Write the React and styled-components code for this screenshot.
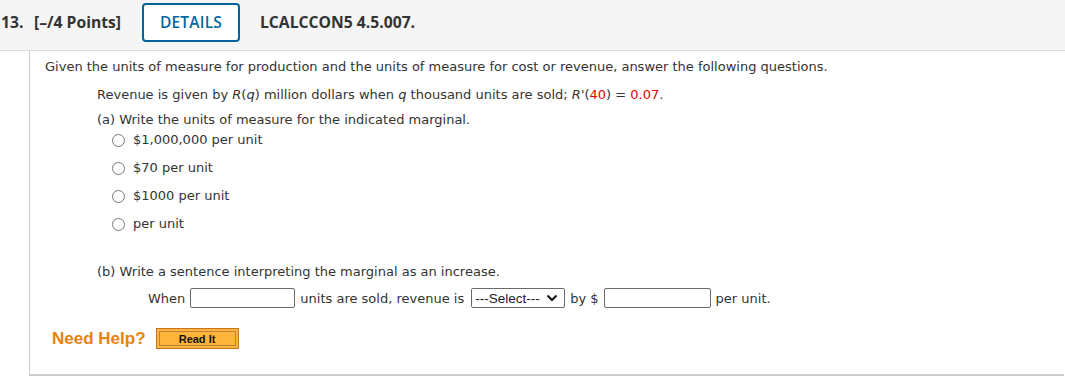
import React from 'react';
import styled, { createGlobalStyle } from 'styled-components';

const GlobalStyle = createGlobalStyle`
  body {
    margin: 0;
    background: #fff;
    font-family: "DejaVu Sans", Verdana, sans-serif;
    color: #333;
  }
`;

const Page = styled.div`
  width: 1065px;
  height: 384px;
  overflow: hidden;
`;

const Header = styled.div`
  display: flex;
  align-items: center;
  height: 51px;
  background: #f5f5f5;
  border-bottom: 1px solid #dcdcdc;
  font-family: "Open Sans", sans-serif;
  font-weight: 700;
  font-size: 15.7px;
  color: #333;
  padding-bottom: 6px;
  box-sizing: border-box;
`;

const Number = styled.span`
  margin-left: 1px;
  width: 33px;
`;

const Points = styled.span`
  width: 108px;
`;

const DetailsButton = styled.button`
  width: 98px;
  height: 39px;
  border: 2px solid #00639a;
  border-radius: 4px;
  background: #fff;
  color: #0067a0;
  font-family: "Open Sans", sans-serif;
  font-size: 15.5px;
  font-weight: 600;
  letter-spacing: 0.2px;
  margin-right: 20px;
  cursor: pointer;
`;

const Body = styled.div`
  margin-left: 29px;
  width: 1035px;
  height: 325px;
  border-left: 1px solid #ccc;
  border-bottom: 2px solid #ccc;
  box-sizing: border-box;
  padding: 8px 0 0 15px;
  font-size: 13px;
`;

const Intro = styled.p`
  margin: 0;
  line-height: 16px;
`;

const Indented = styled.div`
  padding-left: 52px;
  display: flex;
  flex-direction: column;
`;

const Line = styled.p`
  margin: ${p => p.$top || 0}px 0 0;
  line-height: 16px;
`;

const Red = styled.span`
  color: #e60000;
`;

const Italic = styled.i``;

const Choices = styled.div`
  display: flex;
  flex-direction: column;
  gap: 12px;
  margin: 4px 0 0 15px;
`;

const Choice = styled.label`
  display: flex;
  align-items: center;
  gap: 8px;
  line-height: 16px;
`;

const Radio = styled.span`
  width: 11px;
  height: 11px;
  border: 1px solid #767676;
  border-radius: 50%;
  background: #fff;
`;

const SentenceRow = styled.div`
  display: flex;
  align-items: center;
  gap: 5px;
  margin: 8px 0 0 51px;
`;

const TextInput = styled.span`
  display: inline-block;
  width: ${p => p.$w}px;
  height: 20px;
  border: 1px solid #6a6a6a;
  border-radius: 2px;
  box-sizing: border-box;
  background: #fff;
`;

const Select = styled.span`
  display: inline-flex;
  align-items: center;
  justify-content: space-between;
  width: 94px;
  height: 20px;
  margin: 0 0 0 2px;
  border: 1px solid #6a6a6a;
  border-radius: 2px;
  box-sizing: border-box;
  padding: 0 6px 0 3px;
  font-family: "Liberation Sans", Arial, sans-serif;
  font-size: 13.5px;
  color: #222;
`;

const HelpRow = styled.div`
  display: flex;
  align-items: center;
  gap: 10px;
  margin: 20px 0 0 7px;
`;

const HelpLabel = styled.span`
  font-family: "Liberation Sans", Arial, sans-serif;
  font-weight: 700;
  font-size: 17px;
  color: #e8820e;
`;

const ReadIt = styled.button`
  width: 83px;
  height: 21px;
  background: #ffb53c;
  border: 1px solid #c8741c;
  box-shadow: inset 0 0 0 2px #ffb53c, inset 0 0 0 3px #c08040;
  font-family: "Liberation Sans", Arial, sans-serif;
  font-weight: 700;
  font-size: 11px;
  color: #111;
  padding: 0;
  cursor: pointer;
`;

const choices = ['$1,000,000 per unit', '$70 per unit', '$1000 per unit', 'per unit'];

export default function App() {
  return (
    <Page>
      <GlobalStyle />
      <Header>
        <Number>13.</Number>
        <Points>[–/4 Points]</Points>
        <DetailsButton>DETAILS</DetailsButton>
        <span>LCALCCON5 4.5.007.</span>
      </Header>
      <Body>
        <Intro>
          Given the units of measure for production and the units of measure for cost or revenue, answer the following questions.
        </Intro>
        <Indented>
          <Line $top={12}>
            Revenue is given by <Italic>R</Italic>(<Italic>q</Italic>) million dollars when <Italic>q</Italic> thousand units are sold; <Italic>R'</Italic>(<Red>40</Red>) = <Red>0.07</Red>.
          </Line>
          <Line $top={9}>(a) Write the units of measure for the indicated marginal.</Line>
          <Choices>
            {choices.map(c => (
              <Choice key={c}>
                <Radio />
                {c}
              </Choice>
            ))}
          </Choices>
          <Line $top={32}>(b) Write a sentence interpreting the marginal as an increase.</Line>
          <SentenceRow>
            When
            <TextInput $w={105} />
            units are sold, revenue is
            <Select>
              ---Select---
              <svg width="12" height="8" viewBox="0 0 12 8">
                <path d="M1.5 1.5 L6 6 L10.5 1.5" fill="none" stroke="#111" strokeWidth="2" />
              </svg>
            </Select>
            by $
            <TextInput $w={107} />
            per unit.
          </SentenceRow>
        </Indented>
        <HelpRow>
          <HelpLabel>Need Help?</HelpLabel>
          <ReadIt>Read It</ReadIt>
        </HelpRow>
      </Body>
    </Page>
  );
}
